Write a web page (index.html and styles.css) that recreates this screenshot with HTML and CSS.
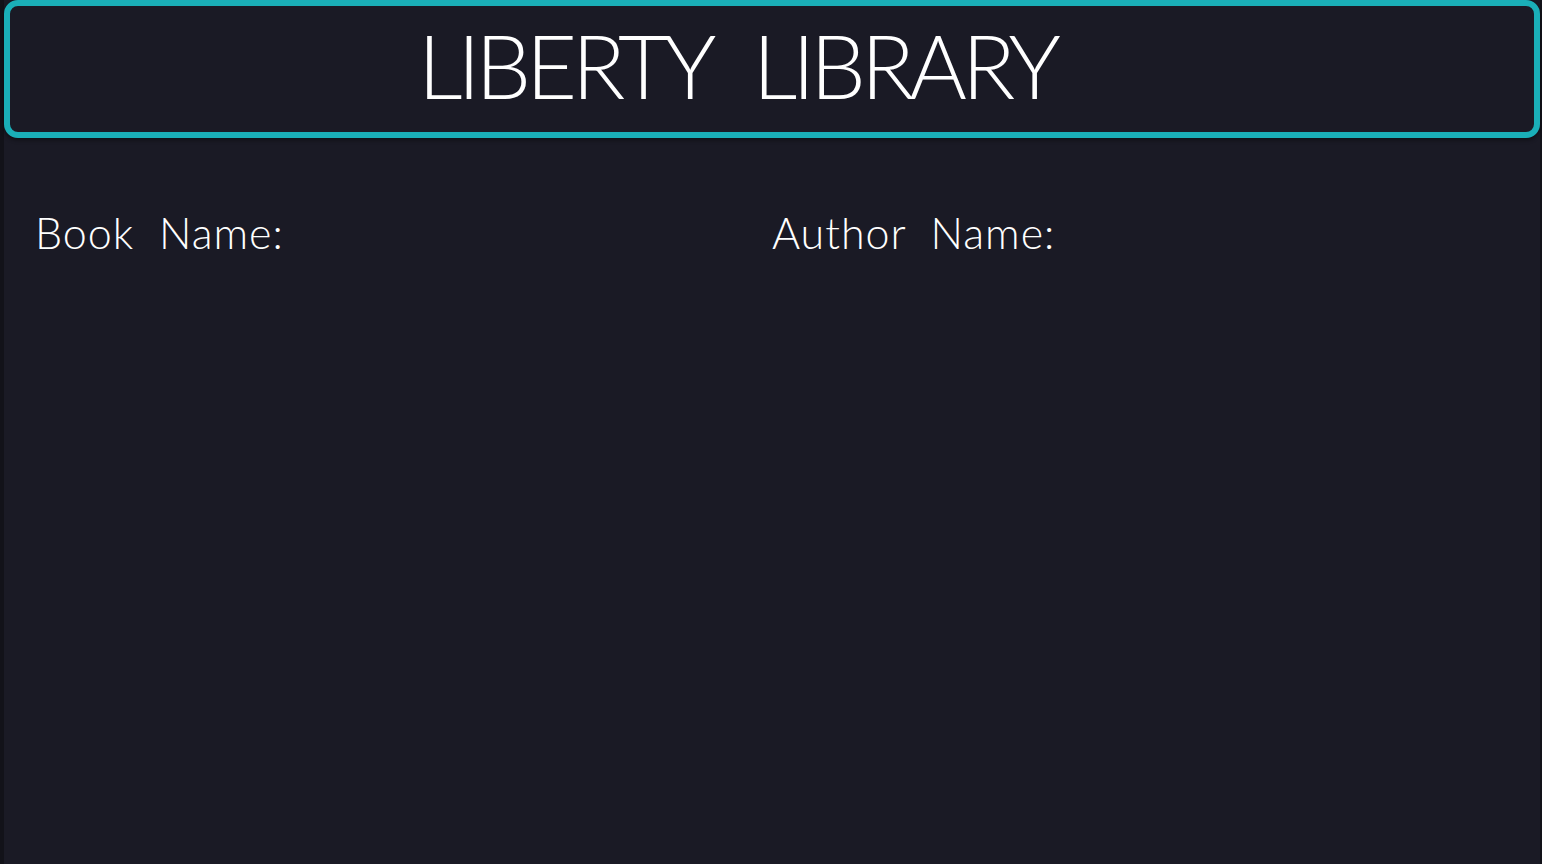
FILE: index.html
```html
<!DOCTYPE html>
<html lang="en">
<head>
<meta charset="utf-8">
<title>Liberty Library</title>
<link rel="stylesheet" href="styles.css">
</head>
<body>
<div class="page">
  <header class="banner">
    <h1 class="title">LIBERTY LIBRARY</h1>
  </header>
  <main class="fields">
    <div class="field"><span class="label">Book Name:</span></div>
    <div class="field"><span class="label">Author Name:</span></div>
  </main>
</div>
</body>
</html>
```
FILE: styles.css
```css
html {
  background: #121219;
}
body {
  margin: 0;
  padding: 0 2px 0 4px;
  font-family: "Lato", "Noto Sans", sans-serif;
  color: #ffffff;
}
.page {
  background: #1a1a25;
  min-height: 864px;
}
.banner {
  height: 138px;
  box-sizing: border-box;
  border: 6px solid #1aafb8;
  border-radius: 14px;
  box-shadow: 0 2px 4px rgba(0, 0, 0, 0.45);
  display: flex;
  align-items: center;
  justify-content: center;
  padding: 0 70px 8px 0;
}
.title {
  margin: 0;
  font-weight: 300;
  font-size: 88px;
  letter-spacing: -5px;
  word-spacing: 26px;
  line-height: 1;
}
.fields {
  display: grid;
  grid-template-columns: 1fr 1fr;
  padding: 69px 31px 0;
}
.label {
  font-size: 43px;
  font-weight: 300;
  letter-spacing: 1px;
  word-spacing: 12px;
}
```
